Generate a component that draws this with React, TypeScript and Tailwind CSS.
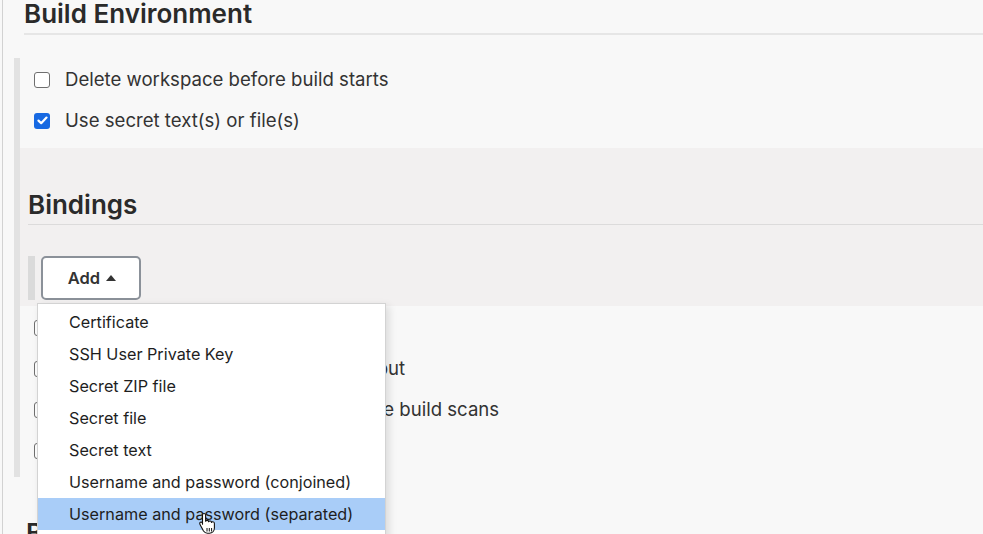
import React from "react";

function Box({ checked = false }: { checked?: boolean }) {
  if (checked) {
    return (
      <span className="flex h-[16px] w-[16px] shrink-0 items-center justify-center rounded-[3px] bg-[#1769e2]">
        <svg width="11" height="9" viewBox="0 0 11 9" fill="none">
          <path d="M1.5 4.6 4.2 7.2 9.5 1.6" stroke="white" strokeWidth="2.2" strokeLinecap="round" strokeLinejoin="round" />
        </svg>
      </span>
    );
  }
  return <span className="h-[16px] w-[16px] shrink-0 rounded-[3px] border-[1.5px] border-[#6f6f6f] bg-white" />;
}

function Row({ label, checked }: { label: string; checked?: boolean }) {
  return (
    <div className="flex h-[41px] items-center gap-[15px] pl-[14px] pt-[2px]">
      <Box checked={checked} />
      <span className="whitespace-nowrap text-[18.6px] text-[#333]">{label}</span>
    </div>
  );
}

const items = [
  "Certificate",
  "SSH User Private Key",
  "Secret ZIP file",
  "Secret file",
  "Secret text",
  "Username and password (conjoined)",
  "Username and password (separated)",
];

function HandCursor() {
  return (
    <svg className="absolute left-[160px] top-[14px]" width="20" height="22" viewBox="0 0 20 22">
      <path
        d="M6 1.5c1 0 1.6.7 1.6 1.6v6.2c.3-.6 1-1 1.7-.9.8.1 1.3.7 1.3 1.4.3-.6.9-.9 1.6-.8.8.1 1.3.8 1.3 1.5.3-.5.9-.8 1.5-.7.9.1 1.4.8 1.4 1.7v4.6c0 2.9-2 5.1-5 5.1H9.4c-1.7 0-2.9-.8-3.9-2.2L2 12.4c-.5-.8-.3-1.7.4-2.1.7-.4 1.5-.2 2 .5l.1 1.5V3.1C4.5 2.2 5 1.5 6 1.5Z"
        fill="white"
        stroke="#111"
        strokeWidth="1.1"
        strokeLinejoin="round"
      />
      <path d="M9 16v3.5M11.3 16v3.5M13.6 16v3.5" stroke="#111" strokeWidth="1" />
    </svg>
  );
}

export default function App() {
  return (
    <div className="h-[534px] w-full overflow-hidden bg-[#f8f8f8] pl-[2px] font-['Inter',sans-serif] text-[#333]">
      <div className="h-full border-l border-[#d2d2d2]">
        <div className="ml-[21px] flex h-[35px] items-start border-b-2 border-[#e6e6e6]">
          <h2 className="-mt-[1px] text-[26px] font-semibold leading-[30px] text-[#2a2a2a]">Build Environment</h2>
        </div>

        <div className="mt-[23px] ml-[11px] flex">
          <div className="w-[6px] shrink-0 bg-[#e2e2e2]" />
          <div className="flex-1 pb-[7px]">
            <Row label="Delete workspace before build starts" />
            <Row label="Use secret text(s) or file(s)" checked />

            <div className="mt-[8px] bg-[#f2f0f0] pb-[6px]">
              <div className="ml-[8px] flex h-[77px] items-end border-b border-[#dcdbdb] pb-[4px]">
                <h3 className="text-[26px] font-semibold leading-[30px] text-[#2a2a2a]">Bindings</h3>
              </div>
              <div className="mt-[31px] ml-[8px] flex">
                <div className="w-[7px] shrink-0 bg-[#dadada]" />
                <div className="relative ml-[6px]">
                  <button className="flex h-[44px] w-[100px] items-center justify-center gap-[6px] rounded-[5px] border-2 border-[#8b9199] bg-white pl-[2px] text-[16.5px] font-semibold text-[#333]">
                    Add
                    <svg width="10" height="6" viewBox="0 0 10 6">
                      <path d="M5 0 10 6H0Z" fill="#333" />
                    </svg>
                  </button>

                  <div className="absolute left-[-4px] top-[47px] z-10 w-[349px] border border-[#d3d3d3] bg-white pt-[2px] pb-[12px] shadow-[3px_3px_8px_rgba(0,0,0,0.12)]">
                    {items.map((it, i) => (
                      <div
                        key={it}
                        className={
                          i === items.length - 1
                            ? "relative flex h-[32px] items-center bg-[#a9cdf8] pl-[31px] text-[16.2px] text-[#1e1e1e]"
                            : "flex h-[32px] items-center pl-[31px] text-[16.2px] text-[#1e1e1e]"
                        }
                      >
                        {it}
                        {i === items.length - 1 && <HandCursor />}
                      </div>
                    ))}
                  </div>
                </div>
              </div>
            </div>

            <Row label="Provide Configuration files" />
            <Row label="Add timestamps to the Console Output" />
            <Row label="Inspect build log for published Gradle build scans" />
            <Row label="Terminate a build if it's stuck" />
          </div>
        </div>

        <div className="ml-[23px] mt-[41px]">
          <h2 className="text-[26px] font-semibold leading-[30px] text-[#2a2a2a]">Build Steps</h2>
        </div>
      </div>
    </div>
  );
}
